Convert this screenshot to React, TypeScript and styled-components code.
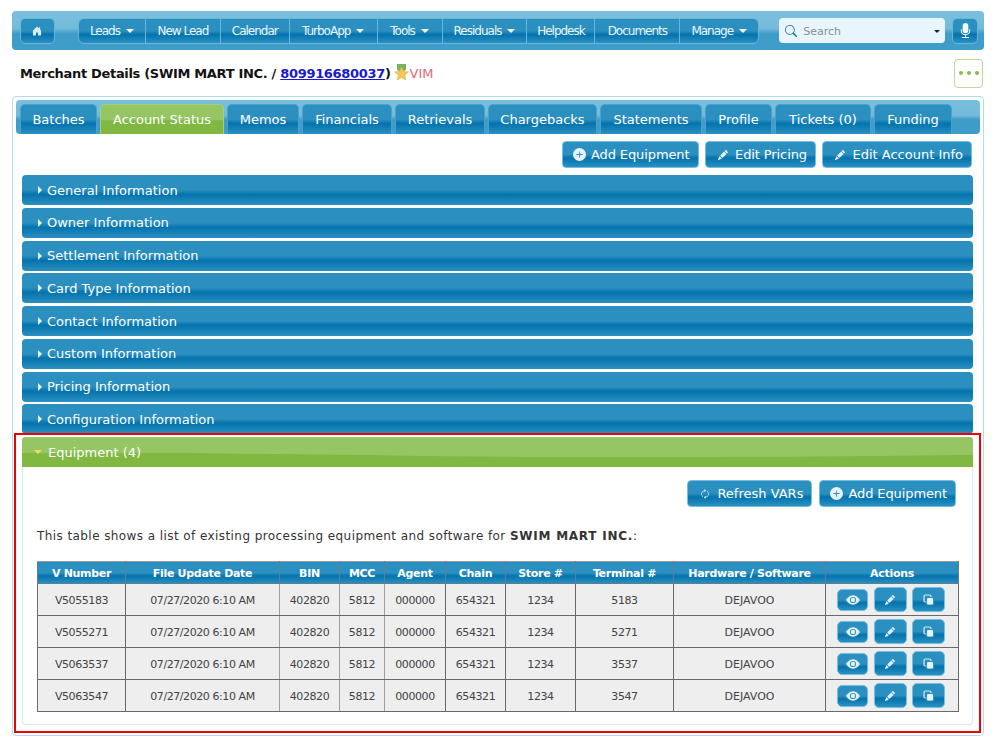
import React from "react";
import styled, { createGlobalStyle, css } from "styled-components";
import { BsHouseDoorFill, BsSearch, BsMicFill, BsPlusCircleFill, BsPencilFill, BsEyeFill, BsArrowRepeat } from "react-icons/bs";

const GlobalStyle = createGlobalStyle`
  html, body { margin: 0; padding: 0; background: #fff; }
  body { font-family: "DejaVu Sans", Verdana, sans-serif; font-size: 12px; color: #333; }
`;

const blueGloss = css`
  background: linear-gradient(180deg, #2b8fbf 0%, #2b8fbf 50%, #0473ad 64%, #2a90c1 100%);
`;

const greenGloss = css`
  background: linear-gradient(180deg, #95c663 0%, #95c663 52%, #80b841 54%, #80b841 100%);
`;

const Page = styled.div`
  width: 1000px;
  height: 749px;
  overflow: hidden;
  padding: 11px 16px 0 12px;
  box-sizing: border-box;
`;

const NavBar = styled.div`
  display: flex;
  align-items: center;
  height: 39px;
  padding: 0 6px 0 8px;
  border-radius: 4px;
  background: linear-gradient(180deg, #7bc0de 0%, #74bbdb 45%, #3f9cc8 58%, #3f9dc9 100%);
`;

const NavButton = styled.a<{ $w: number }>`
  display: flex;
  align-items: center;
  justify-content: center;
  height: 26px;
  width: ${(p) => p.$w}px;
  box-sizing: border-box;
  border: 1px solid #6ab6da;
  border-radius: 5px;
  color: #d5ebf5;
  font-size: 12px;
  ${blueGloss}
`;

const MenuGroup = styled.div`
  display: flex;
  height: 26px;
  margin-left: 23px;
  border: 1px solid #6ab6da;
  border-radius: 6px;
  box-sizing: border-box;
  overflow: hidden;
  ${blueGloss}
`;

const MenuItem = styled.a<{ $w: number }>`
  display: flex;
  align-items: center;
  justify-content: center;
  gap: 5px;
  width: ${(p) => p.$w}px;
  padding-top: 1px;
  box-sizing: border-box;
  color: #eaf6fb;
  font-size: 12px;
  letter-spacing: -1px;
  white-space: nowrap;
  &:not(:last-child) { border-right: 1px solid #6ab6da; }
`;

const Caret = styled.span`
  display: inline-block;
  margin-left: 1px;
  border-left: 4px solid transparent;
  border-right: 4px solid transparent;
  border-top: 4px solid #f2f9fc;
`;

const SearchBox = styled.div`
  display: flex;
  align-items: center;
  width: 166px;
  height: 25px;
  margin-left: 20px;
  padding: 1px 5px 0 6px;
  box-sizing: border-box;
  border-radius: 4px;
  background: #e8f5fd;
  color: #8a8f93;
  font-size: 11px;
  svg { color: #1a6fa5; font-size: 12px; margin-right: 6px; }
`;

const SearchLabel = styled.span`
  flex: 1;
`;

const SearchCaret = styled.span`
  border-left: 3px solid transparent;
  border-right: 3px solid transparent;
  border-top: 3px solid #222;
`;

const MicButton = styled(NavButton)`
  margin-left: 7px;
  color: #eef8fc;
  font-size: 15px;
`;

const TitleRow = styled.div`
  display: flex;
  align-items: center;
  height: 46px;
  padding: 0 1px 0 8px;
`;

const Title = styled.h1`
  margin: 0;
  color: #111;
  font-size: 13px;
  font-weight: 700;
  letter-spacing: -0.32px;
  a { color: #1a1ac8; text-decoration: underline; }
`;

const Medal = styled.svg`
  margin: 0 -1.5px 0 1.5px;
`;

const VimLabel = styled.span`
  color: #dc6b72;
  font-size: 13px;
`;

const MoreButton = styled.button`
  display: flex;
  align-items: center;
  justify-content: center;
  gap: 4px;
  width: 29px;
  height: 29px;
  margin-left: auto;
  padding: 0;
  border: 1px solid #bcd99b;
  border-radius: 4px;
  background: #fff;
`;

const Dot = styled.i`
  width: 4px;
  height: 4px;
  border-radius: 50%;
  background: #86bd4b;
`;

const Container = styled.div`
  height: 640px;
  padding: 3px 3px 0;
  box-sizing: border-box;
  border: 1px solid #a9def6;
  border-radius: 4px;
  background: #fff;
`;

const TabBar = styled.div`
  display: flex;
  gap: 3px;
  height: 34px;
  padding: 4px 0 0 4px;
  box-sizing: border-box;
  border-radius: 4px;
  background: linear-gradient(180deg, #79bedd 0%, #74bbdb 45%, #3f9cc8 58%, #3f9dc9 100%);
`;

const Tab = styled.div<{ $active?: boolean; $w: number }>`
  display: flex;
  align-items: center;
  justify-content: center;
  width: ${(p) => p.$w}px;
  box-sizing: border-box;
  border: 1px solid ${(p) => (p.$active ? "#a4d073" : "#4aa2cc")};
  border-bottom: 0;
  border-radius: 5px 5px 0 0;
  color: #fff;
  font-size: 13px;
  white-space: nowrap;
  ${(p) => (p.$active ? greenGloss : blueGloss)}
`;

const ButtonRow = styled.div<{ $pad: string; $gap: number }>`
  display: flex;
  justify-content: flex-end;
  gap: ${(p) => p.$gap}px;
  padding: ${(p) => p.$pad};
`;

const ActionButton = styled.button<{ $tight?: boolean }>`
  display: flex;
  align-items: center;
  gap: 5px;
  height: 27px;
  padding: 0 8px 0 10px;
  border: 1px solid #6fc0e4;
  border-radius: 4px;
  color: #fff;
  font-family: inherit;
  font-size: 13px;
  letter-spacing: ${(p) => (p.$tight ? "-0.1px" : "0")};
  white-space: nowrap;
  ${blueGloss}
  svg { flex: none; color: #e6f4fa; }
`;

const SmallGlyph = styled.span`
  display: flex;
  margin: 0 2px;
`;

const RefreshGlyph = styled(BsArrowRepeat)`
  transform: rotate(90deg);
`;

const Accordion = styled.div`
  display: flex;
  flex-direction: column;
  gap: 2.75px;
  margin: 7px 7px 0 6px;
`;

const SectionHeader = styled.div<{ $open?: boolean }>`
  position: relative;
  display: flex;
  align-items: center;
  gap: ${(p) => (p.$open ? 6 : 5)}px;
  height: 30px;
  padding-left: ${(p) => (p.$open ? 12 : 16)}px;
  box-sizing: border-box;
  border-radius: 4px 4px ${(p) => (p.$open ? "0 0" : "4px 4px")};
  color: #fff;
  font-size: 13px;
  overflow: hidden;
  ${(p) => (p.$open ? greenGloss : blueGloss)}
`;

const Wave = styled.svg`
  position: absolute;
  inset: 0;
  width: 100%;
  height: 100%;
`;

const HeaderText = styled.span`
  position: relative;
`;

const Arrow = styled.span`
  border-top: 4px solid transparent;
  border-bottom: 4px solid transparent;
  border-left: 4px solid #e3f3fa;
`;

const OpenArrow = styled.span`
  position: relative;
  border-left: 4px solid transparent;
  border-right: 4px solid transparent;
  border-top: 4px solid #f4d96a;
`;

const EquipmentSection = styled.div`
  position: relative;
  &::after {
    content: "";
    position: absolute;
    inset: -4px -8px -8px -8px;
    border: 2px solid #f00000;
    pointer-events: none;
  }
`;

const SectionBody = styled.div`
  height: 258px;
  padding: 0 14px;
  box-sizing: border-box;
  border: 1px solid #d9ebf5;
  border-top: 0;
  border-radius: 0 0 4px 4px;
`;

const Intro = styled.p`
  margin: 21px 0 16px;
  color: #333;
  font-size: 12px;
  line-height: 17px;
  letter-spacing: 0.42px;
  b { letter-spacing: 0.75px; }
`;

const Table = styled.table`
  width: 921px;
  border-collapse: collapse;
  table-layout: fixed;
  font-size: 11px;
`;

const Th = styled.th`
  height: 20px;
  padding: 1px 0 0;
  border: 1px solid #5c7f92;
  border-top-color: #9a9a9a;
  color: #fff;
  font-size: 11px;
  font-weight: 700;
  letter-spacing: -0.3px;
  ${blueGloss}
`;

const Td = styled.td`
  height: 30px;
  padding: 1px 0 0;
  border: 1px solid #6a6a6a;
  background: #eee;
  color: #444;
  text-align: center;
  letter-spacing: -0.42px;
  &:nth-child(2), &:nth-child(3), &:nth-child(4) { border-right-color: #a0a0a0; }
  &:nth-child(9) { letter-spacing: 0; }
`;

const ActionCell = styled.div`
  display: flex;
  align-items: center;
  justify-content: center;
  gap: 5.5px;
  margin-top: -1px;
  padding-right: 2px;
`;

const IconButton = styled.button<{ $w: number; $h: number }>`
  display: flex;
  align-items: center;
  justify-content: center;
  width: ${(p) => p.$w}px;
  height: ${(p) => p.$h}px;
  padding: 0;
  border: 1px solid #6fc0e4;
  border-radius: 5px;
  color: #dff0f8;
  ${blueGloss}
`;

const CopyIcon = () => (
  <svg width="12" height="12" viewBox="0 0 12 12" fill="none">
    <rect x="1" y="1" width="7" height="7" rx="1.5" stroke="#d8edf6" strokeWidth="1.2" />
    <rect x="3.5" y="3.5" width="7" height="7.5" rx="1.5" fill="#e4f3fa" stroke="#1f82b4" strokeWidth="0.8" />
  </svg>
);

const MedalIcon = () => (
  <Medal width="19" height="18" viewBox="0 1 19 18">
    <path d="M5 1H14V7L9.500 9L5 7Z" fill="#74b45a" />
    <path
      d="M9.500 4l2 4.400 5 .5-3.700 3.300 1 4.800-4.300-2.500-4.300 2.500 1-4.800L2.500 8.900l5-.5z"
      fill="#f3c85a"
      stroke="#e2b04a"
      strokeWidth="0.6"
    />
  </Medal>
);

const menu = [
  { label: "Leads", w: 67, caret: true },
  { label: "New Lead", w: 75 },
  { label: "Calendar", w: 69 },
  { label: "TurboApp", w: 88, caret: true },
  { label: "Tools", w: 65, caret: true },
  { label: "Residuals", w: 85, caret: true },
  { label: "Helpdesk", w: 68 },
  { label: "Documents", w: 85 },
  { label: "Manage", w: 78, caret: true },
];

const tabs = [
  { label: "Batches", w: 77 },
  { label: "Account Status", w: 124 },
  { label: "Memos", w: 72 },
  { label: "Financials", w: 90 },
  { label: "Retrievals", w: 90 },
  { label: "Chargebacks", w: 109 },
  { label: "Statements", w: 102 },
  { label: "Profile", w: 67 },
  { label: "Tickets (0)", w: 96 },
  { label: "Funding", w: 78 },
];

const sections = ["General", "Owner", "Settlement", "Card Type", "Contact", "Custom", "Pricing", "Configuration"];

const columns = [
  { label: "V Number", w: 88 },
  { label: "File Update Date", w: 154 },
  { label: "BIN", w: 60 },
  { label: "MCC", w: 45 },
  { label: "Agent", w: 61 },
  { label: "Chain", w: 60 },
  { label: "Store #", w: 70 },
  { label: "Terminal #", w: 98 },
  { label: "Hardware / Software", w: 152 },
  { label: "Actions", w: 133 },
];

const rows = [
  ["V5055183", "5183"],
  ["V5055271", "5271"],
  ["V5063537", "3537"],
  ["V5063547", "3547"],
];

export default function App() {
  return (
    <Page>
      <GlobalStyle />
      <NavBar>
        <NavButton $w={35}>
          <BsHouseDoorFill size={10} />
        </NavButton>
        <MenuGroup>
          {menu.map((m) => (
            <MenuItem key={m.label} $w={m.w}>
              {m.label}
              {m.caret && <Caret />}
            </MenuItem>
          ))}
        </MenuGroup>
        <SearchBox>
          <BsSearch />
          <SearchLabel>Search</SearchLabel>
          <SearchCaret />
        </SearchBox>
        <MicButton $w={26}>
          <BsMicFill />
        </MicButton>
      </NavBar>

      <TitleRow>
        <Title>
          Merchant Details (SWIM MART INC. / <a href="#">809916680037</a>)
        </Title>
        <MedalIcon />
        <VimLabel>VIM</VimLabel>
        <MoreButton>
          <Dot />
          <Dot />
          <Dot />
        </MoreButton>
      </TitleRow>

      <Container>
        <TabBar>
          {tabs.map((t) => (
            <Tab key={t.label} $w={t.w} $active={t.label === "Account Status"}>
              {t.label}
            </Tab>
          ))}
        </TabBar>

        <ButtonRow $pad="7px 8px 0 0" $gap={6.5}>
          <ActionButton $tight>
            <BsPlusCircleFill size={13} />
            Add Equipment
          </ActionButton>
          <ActionButton $tight>
            <SmallGlyph>
              <BsPencilFill size={10} />
            </SmallGlyph>
            Edit Pricing
          </ActionButton>
          <ActionButton>
            <SmallGlyph>
              <BsPencilFill size={10} />
            </SmallGlyph>
            Edit Account Info
          </ActionButton>
        </ButtonRow>

        <Accordion>
          {sections.map((s) => (
            <SectionHeader key={s}>
              <Arrow />
              {s} Information
            </SectionHeader>
          ))}
          <EquipmentSection>
            <SectionHeader $open>
              <Wave viewBox="0 0 951 30" preserveAspectRatio="none">
                <path d="M0 0H951V18C800 20 600 21 400 19C250 17 100 15 0 15Z" fill="#95c663" />
              </Wave>
              <OpenArrow />
              <HeaderText>Equipment (4)</HeaderText>
            </SectionHeader>
            <SectionBody>
              <ButtonRow $pad="13px 2px 0 0" $gap={7}>
                <ActionButton>
                  <SmallGlyph>
                    <RefreshGlyph size={10} />
                  </SmallGlyph>
                  Refresh VARs
                </ActionButton>
                <ActionButton $tight>
                  <BsPlusCircleFill size={13} />
                  Add Equipment
                </ActionButton>
              </ButtonRow>
              <Intro>
                This table shows a list of existing processing equipment and software for <b>SWIM MART INC.</b>:
              </Intro>
              <Table>
                <colgroup>
                  {columns.map((c) => (
                    <col key={c.label} width={c.w} />
                  ))}
                </colgroup>
                <thead>
                  <tr>
                    {columns.map((c) => (
                      <Th key={c.label}>{c.label}</Th>
                    ))}
                  </tr>
                </thead>
                <tbody>
                  {rows.map(([vNumber, terminal]) => (
                    <tr key={vNumber}>
                      <Td>{vNumber}</Td>
                      <Td>07/27/2020 6:10 AM</Td>
                      <Td>402820</Td>
                      <Td>5812</Td>
                      <Td>000000</Td>
                      <Td>654321</Td>
                      <Td>1234</Td>
                      <Td>{terminal}</Td>
                      <Td>DEJAVOO</Td>
                      <Td>
                        <ActionCell>
                          <IconButton $w={31} $h={22}>
                            <BsEyeFill size={14} />
                          </IconButton>
                          <IconButton $w={33} $h={25}>
                            <BsPencilFill size={10} />
                          </IconButton>
                          <IconButton $w={33} $h={25}>
                            <CopyIcon />
                          </IconButton>
                        </ActionCell>
                      </Td>
                    </tr>
                  ))}
                </tbody>
              </Table>
            </SectionBody>
          </EquipmentSection>
        </Accordion>
      </Container>
    </Page>
  );
}
